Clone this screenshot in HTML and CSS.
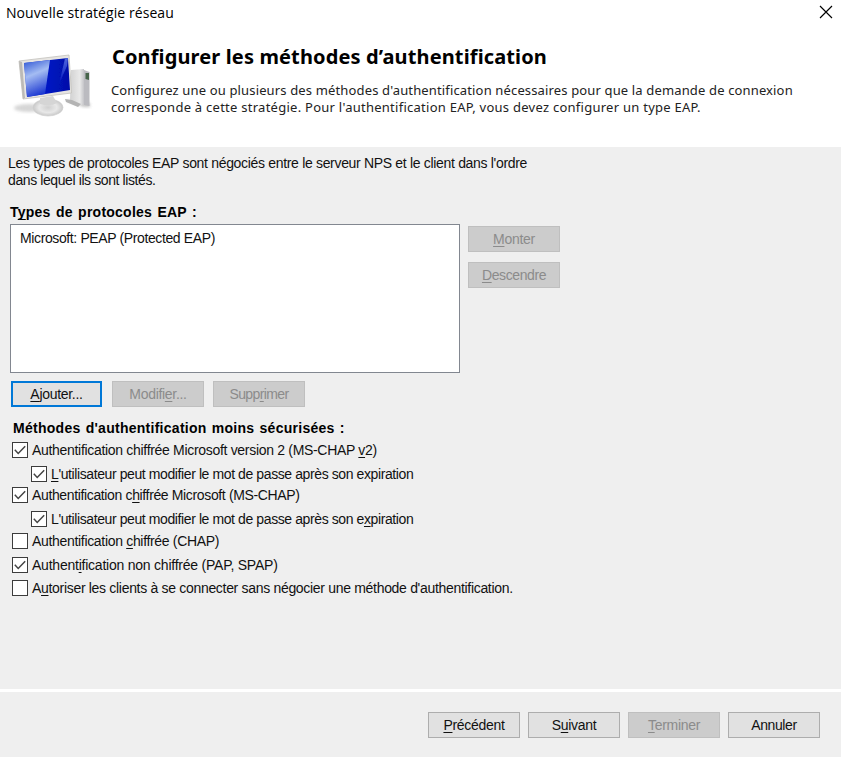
FILE: index.html
```html
<!DOCTYPE html>
<html lang="fr">
<head>
<meta charset="utf-8">
<title>Nouvelle stratégie réseau</title>
<link rel="stylesheet" href="styles.css">
</head>
<body>
<div class="dialog">
  <header class="header">
    <div class="titlebar">
      <span class="title">Nouvelle stratégie réseau</span>
      <svg class="close" width="14" height="14" viewBox="0 0 14 14"><path d="M1 1 13 13M13 1 1 13" stroke="#000" stroke-width="1.15" fill="none"/></svg>
    </div>
    <div class="banner">
      <svg class="computer" width="84" height="72" viewBox="0 0 84 72">
        <defs>
          <linearGradient id="screen" x1="0" y1="0" x2="1" y2="0"><stop offset="0" stop-color="#2448d8"/><stop offset=".5" stop-color="#0014c4"/><stop offset="1" stop-color="#0010a8"/></linearGradient>
          <linearGradient id="glare" x1=".2" y1="0" x2=".5" y2="1"><stop offset="0" stop-color="#3a60d8"/><stop offset=".4" stop-color="#a4bcf2"/><stop offset="1" stop-color="#1632d0"/></linearGradient>
          <linearGradient id="shine" x1="0" y1="0" x2="0" y2="1"><stop offset="0" stop-color="#5068dc"/><stop offset="1" stop-color="#0012c0"/></linearGradient>
          <linearGradient id="tower" x1="0" y1="0" x2="1" y2="0"><stop offset="0" stop-color="#d2d2d2"/><stop offset=".7" stop-color="#e9e9e9"/><stop offset="1" stop-color="#c4c4c8"/></linearGradient>
          <radialGradient id="base"><stop offset="0" stop-color="#d0d0d0"/><stop offset=".6" stop-color="#e8e8e8"/><stop offset="1" stop-color="#c8c8c8"/></radialGradient>
          <filter id="soft" x="-20%" y="-20%" width="140%" height="140%"><feGaussianBlur stdDeviation="1.5"/></filter>
          <filter id="edge"><feGaussianBlur stdDeviation=".4"/></filter>
        </defs>
        <g filter="url(#edge)">
          <ellipse cx="17" cy="57" rx="15" ry="4" fill="#999" opacity=".4" filter="url(#soft)"/>
          <path d="M53 49 78 52 78 56 72 56Z" fill="#888" opacity=".5" filter="url(#soft)"/>
          <path d="M59 19 72 18 72 53 68 55 58 49Z" fill="url(#tower)"/>
          <path d="M72 19 77.5 21 77.5 55 72 54Z" fill="#bbbbc0"/>
          <path d="M73.5 22 77 22 77 29 73.5 28Z" fill="#47654c"/>
          <path d="M53 48 60 49 69 53 66 56 54 51Z" fill="#b3b3b3"/>
          <ellipse cx="36" cy="56.5" rx="15" ry="8.5" fill="url(#base)" stroke="#cfcfcf" stroke-width=".7"/>
          <path d="M28 47 41 45 45 52Q38 56 28 53Z" fill="#d5d5d5"/>
          <path d="M7 10 57 4 59.5 42 11 48Z" fill="#e7e5e2" stroke="#c3c1bd" stroke-width=".8"/>
          <path d="M7 10 10 11 13 47 11 48Z" fill="#bcbab6"/>
          <path d="M12 12 56 7 58 39 15 46Z" fill="url(#screen)"/>
          <path d="M12 12 38 9 33 43 15 46Z" fill="url(#glare)"/>
          <path d="M56 7 55 15 47 33 53 7.5Z" fill="url(#shine)"/>
        </g>
      </svg>
      <div class="banner-text">
        <h1 class="heading">Configurer les méthodes d’authentification</h1>
        <p class="desc"><span class="d1">Configurez une ou plusieurs des méthodes d'authentification nécessaires pour que la demande de connexion</span><br><span class="d2">corresponde à cette stratégie. Pour l'authentification EAP, vous devez configurer un type EAP.</span></p>
      </div>
    </div>
  </header>
  <main class="content">
    <p class="intro"><span class="i1">Les types de protocoles EAP sont négociés entre le serveur NPS et le client dans l'ordre</span><br><span class="i2">dans lequel ils sont listés.</span></p>
    <h2 class="label types">T<u>y</u>pes de protocoles EAP :</h2>
    <div class="protocols">
      <div class="list"><span class="item">Microsoft: PEAP (Protected EAP)</span></div>
      <div class="order">
        <button class="btn off" disabled><span class="b1"><u>M</u>onter</span></button>
        <button class="btn off" disabled><span class="b2"><u>D</u>escendre</span></button>
      </div>
    </div>
    <div class="actions">
      <button class="btn focus"><span class="b3"><u>A</u>jouter...</span></button>
      <button class="btn off" disabled><span class="b4">Modifi<u>e</u>r...</span></button>
      <button class="btn off" disabled><span class="b5">Supp<u>r</u>imer</span></button>
    </div>
    <h2 class="label methods">Méthodes d'authentification moins sécurisées :</h2>
    <div class="checks">
      <label class="check"><i class="box"><svg viewBox="0 0 14 14"><path d="M1.8 6.8 5.2 10.4 12.2 3.2"/></svg></i><span class="c1">Authentification chiffrée Microsoft version 2 (MS-CHAP <u>v</u>2)</span></label>
      <label class="check sub"><i class="box"><svg viewBox="0 0 14 14"><path d="M1.8 6.8 5.2 10.4 12.2 3.2"/></svg></i><span class="c2"><u>L</u>'utilisateur peut modifier le mot de passe après son expiration</span></label>
      <label class="check"><i class="box"><svg viewBox="0 0 14 14"><path d="M1.8 6.8 5.2 10.4 12.2 3.2"/></svg></i><span class="c3">Authentification c<u>h</u>iffrée Microsoft (MS-CHAP)</span></label>
      <label class="check sub"><i class="box"><svg viewBox="0 0 14 14"><path d="M1.8 6.8 5.2 10.4 12.2 3.2"/></svg></i><span class="c2">L'utilisateur peut modifier le mot de passe après son e<u>x</u>piration</span></label>
      <label class="check"><i class="box"></i><span class="c5">Authentification <u>c</u>hiffrée (CHAP)</span></label>
      <label class="check"><i class="box"><svg viewBox="0 0 14 14"><path d="M1.8 6.8 5.2 10.4 12.2 3.2"/></svg></i><span class="c6">Authent<u>i</u>fication non chiffrée (PAP, SPAP)</span></label>
      <label class="check"><i class="box"></i><span class="c7">A<u>u</u>toriser les clients à se connecter sans négocier une méthode d'authentification.</span></label>
    </div>
  </main>
  <footer class="footer">
    <button class="btn"><span class="f1"><u>P</u>récédent</span></button>
    <button class="btn"><span class="f2">S<u>u</u>ivant</span></button>
    <button class="btn off" disabled><span class="f3"><u>T</u>erminer</span></button>
    <button class="btn"><span class="f4">Annuler</span></button>
  </footer>
</div>
</body>
</html>
```
FILE: styles.css
```css
* { box-sizing: border-box; }
body, h1, h2, p { margin: 0; }
body { background: #efefef; overflow: hidden; }
.dialog {
  width: 841px; height: 757px; display: flex; flex-direction: column;
  font: 14px/17px "Liberation Sans", Arial, sans-serif; color: #111; white-space: nowrap;
  font-variant-ligatures: none;
}
u { text-decoration: underline; text-underline-offset: 2px; text-decoration-thickness: 1px; text-decoration-skip-ink: none; }

.header { height: 147px; background: #fff; }
.titlebar { display: flex; justify-content: space-between; height: 40px; padding: 4px 8px 0 6px; }
.title { font: 14px/17px "Open Sans", sans-serif; color: #000; letter-spacing: 0.07px; }
.close { margin-top: 1px; }
.banner { display: flex; padding-left: 12px; }
.computer { margin-top: 11px; }
.banner-text { padding: 3px 0 0 15px; }
.heading { padding-left: 1px; font: bold 20px/28px "Noto Sans", sans-serif; color: #000; letter-spacing: 0.13px; }
.desc { margin-top: 11px; font: 13px/17px "Noto Sans", sans-serif; color: #222; }
.d1 { letter-spacing: 0.145px; }
.d2 { letter-spacing: 0.26px; }

.content { height: 542px; padding: 8px 9px 0 8px; }
.i1 { letter-spacing: -0.32px; }
.i2 { letter-spacing: -0.4px; }
.label { font-size: 14px; line-height: 17px; font-weight: bold; color: #000; }
.types { margin: 15px 0 3px 2px; letter-spacing: 0.24px; word-spacing: 1.2px; }
.protocols { display: flex; gap: 8px; padding-left: 2px; }
.list { width: 450px; height: 149px; padding: 5px 0 0 9px; background: #fff; border: 1px solid #828790; }
.item { letter-spacing: -0.38px; }
.order { display: flex; flex-direction: column; gap: 10px; padding-top: 2px; }
.actions { display: flex; gap: 9px; margin-top: 8px; padding-left: 3px; }
.btn {
  width: 92px; height: 26px; padding: 0; border: 1px solid #adadad; background: #e1e1e1;
  font: inherit; color: #111; text-align: center; letter-spacing: -0.3px;
}
.btn.off { background: #ccc; border-color: #bfbfbf; color: #8b8b8b; }
.btn.focus { width: 91px; margin-right: 1px; border: 2px solid #0078d7; }
.b4 { letter-spacing: -0.3px; }
.b5 { letter-spacing: -0.6px; }
.b2, .f4 { letter-spacing: -0.4px; }
.methods { margin: 13px 0 0 5px; letter-spacing: 0.27px; word-spacing: 1px; }

.checks { display: grid; grid-template-rows: 24px 21px 24px 22px 24px 23px 23px; margin: 5px 0 0 4px; }
.check { display: flex; align-items: flex-start; gap: 4px; }
.sub { padding-left: 19px; }
.box { flex: none; width: 16px; height: 16px; border: 1px solid #3c3c3c; background: #fff; }
.box svg { display: block; width: 14px; height: 14px; }
.box path { fill: none; stroke: #444; stroke-width: 1.5; }
.c1 { letter-spacing: -0.31px; }
.c2 { letter-spacing: -0.4px; }
.c3 { letter-spacing: -0.36px; }
.c5 { letter-spacing: -0.32px; }
.c6 { letter-spacing: -0.23px; }
.c7 { letter-spacing: -0.31px; }

.footer { flex: 1; display: flex; gap: 8px; justify-content: flex-end; padding: 20px 21px 0 0; border-top: 3px solid #fff; }
```
